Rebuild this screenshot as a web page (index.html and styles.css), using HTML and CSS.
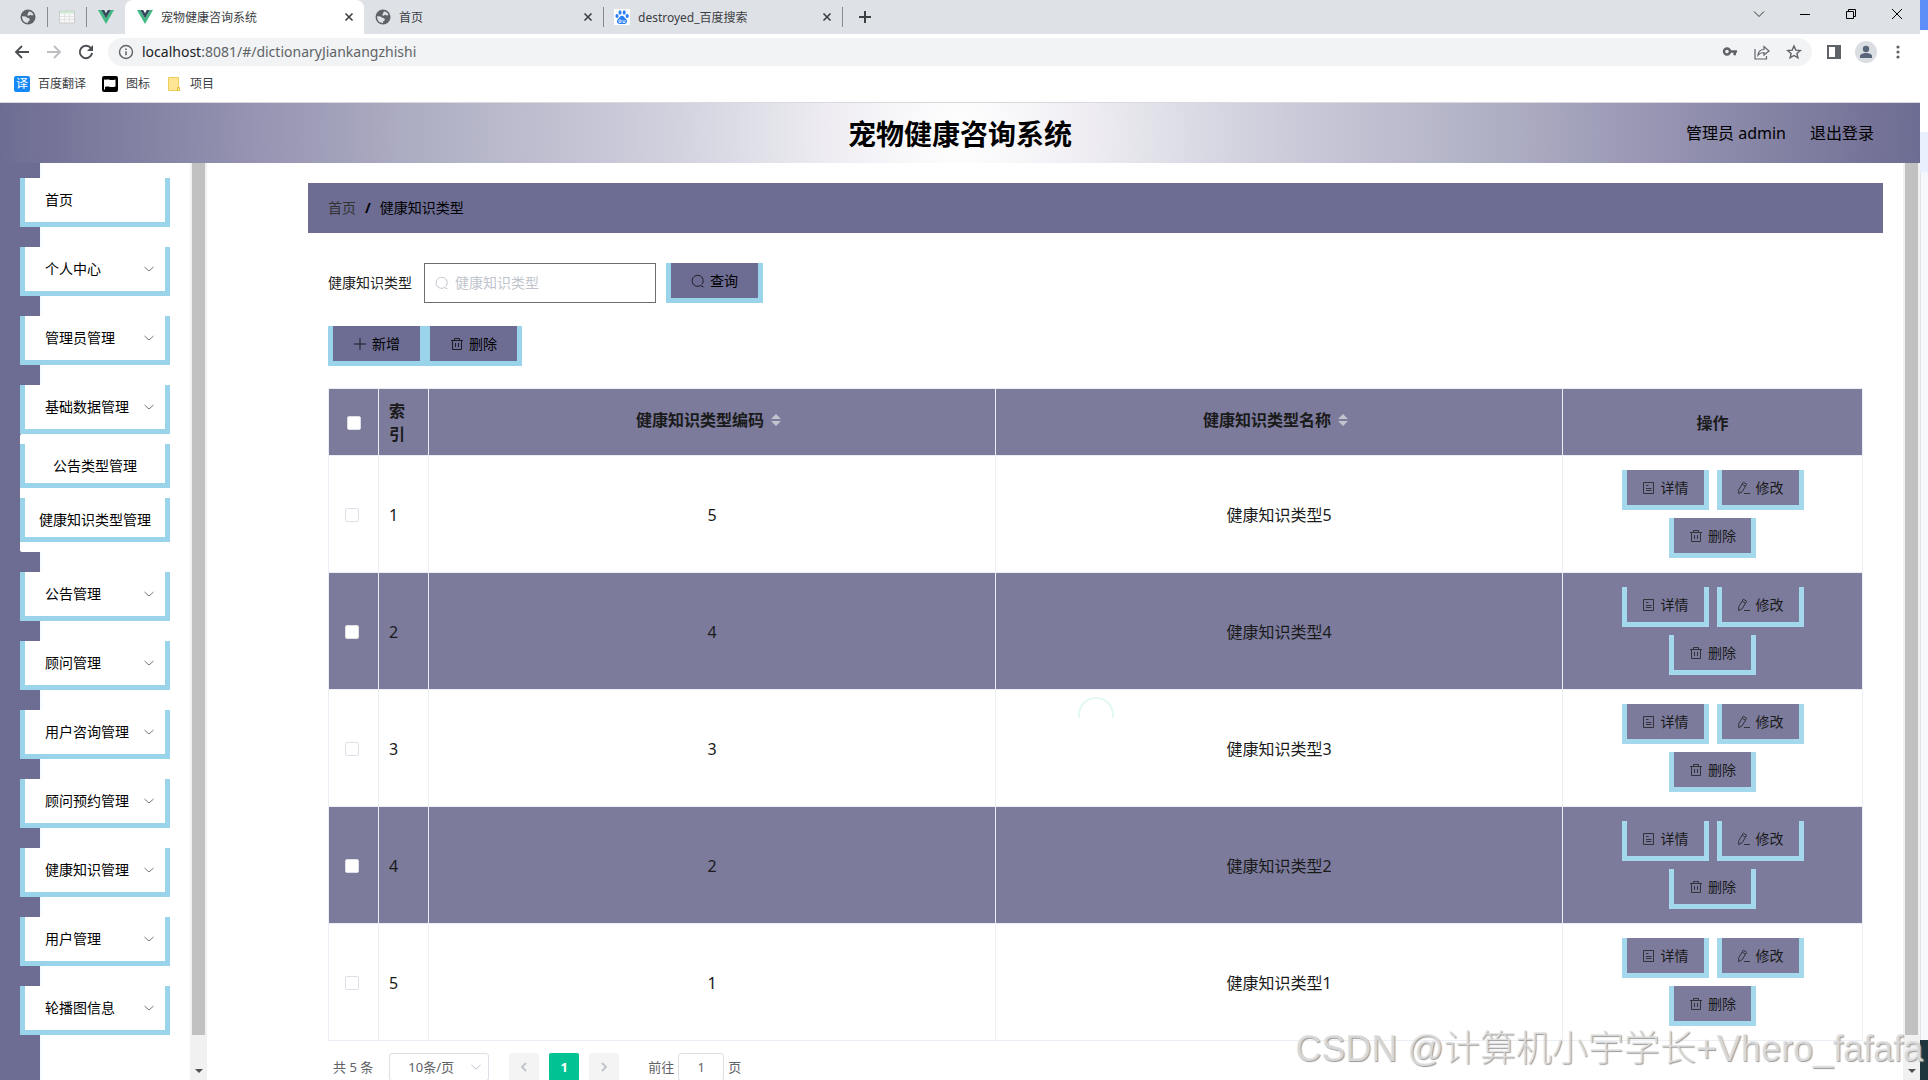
FILE: index.html
```html
<!DOCTYPE html>
<html lang="zh-CN">
<head>
  <meta charset="UTF-8" />
  <meta name="viewport" content="width=device-width, initial-scale=1.0" />
  <title>宠物健康咨询系统</title>
  <link rel="stylesheet" href="styles.css">
</head>
<body>
  <!-- 图标 -->
  <svg class="sprite" aria-hidden="true">
    <symbol id="i-globe" viewBox="0 0 16 16"><circle cx="8" cy="8" r="7.500" fill="#5f6368"/><path d="M9 2.200l3 1.300 1.600 2.500-1.800.6-1.500-.8-1.800 1-1.300-.6.800-1.700z" fill="#dee1e6"/><path d="M2 7.300l3.500.2 1.800 1.300 2.200.6.300 1.800-1.600 1.200-.4 1.600C4.500 14 2 11.500 2 7.300z" fill="#dee1e6"/></symbol>
    <symbol id="i-vue" viewBox="0 0 16 16"><path d="M0 1h3.200L8 9.300 12.800 1H16L8 15z" fill="#41b883"/><path d="M3.200 1h3L8 4.200 9.800 1h3L8 9.300z" fill="#35495e"/></symbol>
    <symbol id="i-x" viewBox="0 0 16 16"><path d="M4.500 4.500l7 7M11.500 4.500l-7 7" fill="none" stroke="#3c4043" stroke-width="1.600"/></symbol>
    <symbol id="i-down" viewBox="0 0 12 12"><path d="M1.500 4l4.500 4 4.500-4" fill="none" stroke="currentColor"/></symbol>
    <symbol id="i-search" viewBox="0 0 14 14"><path d="M9.500 11.500A5.500 5.500 0 1 1 10.800 10.400M9.300 11.300l3.200 1.700" fill="none" stroke="currentColor"/></symbol>
    <symbol id="i-plus" viewBox="0 0 14 14"><path d="M7 1v12M1 7h12" fill="none" stroke="currentColor"/></symbol>
    <symbol id="i-trash" viewBox="0 0 14 14"><path d="M1 3.500h12M2.500 3.500v9h9v-9M4.500 3.500v-2h5v2M5.500 6v4M8.500 6v4" fill="none" stroke="currentColor"/></symbol>
    <symbol id="i-doc" viewBox="0 0 14 14"><path d="M1.500 1.500h10v11h-10zM4 4.500h2.500M4 7.500h5.500M4 9.500h5.500" fill="none" stroke="currentColor"/></symbol>
    <symbol id="i-edit" viewBox="0 0 14 14"><path d="M6.300 1.200l3.400 2-4.600 7.600-3.500 1.800.2-4zM5.200 3.200l3.300 2M7 12.500h6" fill="none" stroke="currentColor"/></symbol>
  </svg>

  <div class="window">
    <!-- 标签栏 -->
    <div class="tabs">
      <button class="pin" aria-label="固定标签 1"><svg class="icon"><use href="#i-globe"/></svg></button>
      <button class="pin split" aria-label="固定标签 2"><svg class="icon" viewBox="0 0 16 16"><path d="M.5 2h15v12H.5z" fill="#f7f7f7" stroke="#ccc"/><path d="M1 2h14v2.500H1z" fill="#cfe8d3"/><path d="M1 7.500h14M1 10.500h14M5.500 5v9M10.500 5v9" stroke="#e2e2e2"/></svg></button>
      <button class="pin split" aria-label="固定标签 3"><svg class="icon"><use href="#i-vue"/></svg></button>
      <div class="tab active"><svg class="icon"><use href="#i-vue"/></svg><span>宠物健康咨询系统</span><button aria-label="关闭"><svg class="icon"><use href="#i-x"/></svg></button></div>
      <div class="tab"><svg class="icon"><use href="#i-globe"/></svg><span>首页</span><button aria-label="关闭"><svg class="icon"><use href="#i-x"/></svg></button></div>
      <div class="tab split"><svg class="icon" viewBox="0 0 16 16"><path d="M0 0h16v16H0z" fill="#fff"/><g fill="#2c7ef8"><ellipse cx="3" cy="7" rx="1.600" ry="2.100"/><ellipse cx="6" cy="3.500" rx="1.500" ry="2.200"/><ellipse cx="10.200" cy="3.500" rx="1.500" ry="2.200"/><ellipse cx="13.200" cy="7" rx="1.600" ry="2.100"/><path d="M8 6.800c2 0 2.500 2 4 3.300 2 1.700 1 4.900-1.500 4.900h-5C3 15 2 11.800 4 10.100 5.500 8.800 6 6.800 8 6.800z"/></g><path d="M5 11h2v2.500H5zM9 11v2.500h2V11" fill="none" stroke="#fff" stroke-width=".8"/></svg><span>destroyed_百度搜索</span><button aria-label="关闭"><svg class="icon"><use href="#i-x"/></svg></button></div>
      <button class="new-tab split" aria-label="新标签"><svg class="icon" viewBox="0 0 16 16"><path d="M8 2v12M2 8h12" stroke="#3c4043" stroke-width="2"/></svg></button>
      <div class="win-controls">
        <button aria-label="搜索标签"><svg class="icon" viewBox="0 0 16 16"><path d="M3 5.500l5 5 5-5" fill="none" stroke="#333"/></svg></button>
        <button aria-label="最小化"><svg class="icon" viewBox="0 0 16 16"><path d="M3 8.500h10" stroke="#000"/></svg></button>
        <button aria-label="还原"><svg class="icon" viewBox="0 0 16 16"><path d="M3.500 5.500h7v7h-7zM5.500 5.500v-2h7v7h-2" fill="none" stroke="#000"/></svg></button>
        <button aria-label="关闭窗口"><svg class="icon" viewBox="0 0 16 16"><path d="M3 3l10 10M13 3L3 13" stroke="#000"/></svg></button>
      </div>
    </div>

    <!-- 地址栏 -->
    <div class="toolbar">
      <button aria-label="后退"><svg class="icon" viewBox="0 0 16 16"><path d="M15 8H2.500M8 2L2 8l6 6" fill="none" stroke="#4a4d51" stroke-width="1.800"/></svg></button>
      <button aria-label="前进"><svg class="icon" viewBox="0 0 16 16"><path d="M1 8h12.500M8 2l6 6-6 6" fill="none" stroke="#bcbec1" stroke-width="1.800"/></svg></button>
      <button aria-label="刷新"><svg class="icon" viewBox="0 0 16 16"><path d="M13 4.300A6.200 6.200 0 1 0 14.100 9" fill="none" stroke="#4a4d51" stroke-width="1.900"/><path d="M15 1v6H9z" fill="#4a4d51"/></svg></button>
      <div class="omnibox">
        <svg class="icon" viewBox="0 0 16 16"><circle cx="8" cy="8" r="6.500" fill="none" stroke="#5f6368" stroke-width="1.400"/><path d="M8 7.200v4M8 4.500V6" stroke="#5f6368" stroke-width="1.500"/></svg>
        <span class="url"><b>localhost</b>:8081/#/dictionaryJiankangzhishi</span>
        <button aria-label="密码"><svg class="icon" viewBox="0 0 16 16"><circle cx="5" cy="7.500" r="3" fill="none" stroke="#5f6368" stroke-width="2.400"/><path d="M8 6.200h7v2.600h-1v2.400h-2.600V8.800H8z" fill="#5f6368"/></svg></button>
        <button aria-label="分享"><svg class="icon" viewBox="0 0 16 16"><path d="M1 5v10h11.500v-3M4 11c.5-4 3-5.500 6-5.500v-3L15 7l-5 4V8.500C7.500 8.500 5.500 9.200 4 11z" fill="none" stroke="#5f6368" stroke-width="1.200"/></svg></button>
        <button aria-label="收藏"><svg class="icon" viewBox="0 0 16 16"><path d="M8 2l1.800 4.100 4.500.4-3.400 3 1 4.400L8 11.500l-3.900 2.400 1-4.400-3.400-3 4.500-.4z" fill="none" stroke="#5f6368" stroke-width="1.400"/></svg></button>
      </div>
      <button aria-label="侧边栏"><svg class="icon" viewBox="0 0 16 16"><path d="M1 1h14v14H1zM3 3v10h6V3z" fill="#5f6368" fill-rule="evenodd"/></svg></button>
      <button class="avatar" aria-label="用户"><svg class="icon" viewBox="0 0 16 16"><g fill="#59657a"><circle cx="8" cy="5" r="3.200"/><path d="M2 14v-2c0-2 3.500-3 6-3s6 1 6 3v2z"/></g></svg></button>
      <button aria-label="更多"><svg class="icon" viewBox="0 0 16 16"><g fill="#5f6368"><circle cx="8" cy="3" r="1.600"/><circle cx="8" cy="8" r="1.600"/><circle cx="8" cy="13" r="1.600"/></g></svg></button>
    </div>

    <div class="bookmarks">
      <a href="#"><i class="bm-fanyi">译</i>百度翻译</a>
      <a href="#"><svg class="icon" viewBox="0 0 16 16"><rect width="16" height="16" rx="2"/><path d="M2.500 13.500V3.500" stroke="#fff"/><path d="M3 4c3.500-1.500 5 1 10.500-.5v7C8 12 6.500 9.500 3 11z" fill="#fff"/></svg>图标</a>
      <a href="#"><svg class="icon" viewBox="0 0 16 16"><path d="M2.500 1.500h10v8l1 5h-11z" fill="#ffe694" stroke="#f0cc58"/><path d="M11.500 14.500v-3h2v3z" fill="#ffe694" stroke="#e8bf40"/></svg>项目</a>
    </div>

    <!-- 顶部 -->
    <header class="header">
      <h1>宠物健康咨询系统</h1>
      <div class="user"><span>管理员 admin</span><a href="#">退出登录</a></div>
    </header>

    <div class="layout">
      <!-- 左侧菜单 -->
      <nav class="sidebar">
        <ul class="menu">
          <li><a href="#">首页</a></li>
          <li><a href="#">个人中心<svg><use href="#i-down"/></svg></a></li>
          <li><a href="#">管理员管理<svg><use href="#i-down"/></svg></a></li>
          <li class="open"><a href="#">基础数据管理<svg><use href="#i-down"/></svg></a>
            <ul class="submenu">
              <li><a href="#">公告类型管理</a></li>
              <li><a href="#">健康知识类型管理</a></li>
            </ul>
          </li>
          <li><a href="#">公告管理<svg><use href="#i-down"/></svg></a></li>
          <li><a href="#">顾问管理<svg><use href="#i-down"/></svg></a></li>
          <li><a href="#">用户咨询管理<svg><use href="#i-down"/></svg></a></li>
          <li><a href="#">顾问预约管理<svg><use href="#i-down"/></svg></a></li>
          <li><a href="#">健康知识管理<svg><use href="#i-down"/></svg></a></li>
          <li><a href="#">用户管理<svg><use href="#i-down"/></svg></a></li>
          <li><a href="#">轮播图信息<svg><use href="#i-down"/></svg></a></li>
        </ul>
      </nav>
      <div class="scrollbar" aria-hidden="true"><i></i><svg viewBox="0 0 8 4"><path d="M0 0h8L4 4z"/></svg></div>

      <!-- 内容 -->
      <main class="main">
        <div class="breadcrumb"><a href="#">首页</a><b>/</b><span>健康知识类型</span></div>
        <div class="content">
          <form class="search">
            <label for="type">健康知识类型</label>
            <div class="search-box"><svg><use href="#i-search"/></svg><input id="type" type="text" placeholder="健康知识类型" /></div>
            <button type="button" class="btn"><svg><use href="#i-search"/></svg>查询</button>
          </form>
          <div class="tools">
            <button class="btn"><svg><use href="#i-plus"/></svg>新增</button>
            <button class="btn"><svg><use href="#i-trash"/></svg>删除</button>
          </div>

          <table class="table">
            <colgroup><col class="c-check"><col class="c-index"><col><col><col class="c-action"></colgroup>
            <thead>
              <tr>
                <th><input type="checkbox" aria-label="全选" /></th>
                <th class="index">索引</th>
                <th><span class="sort">健康知识类型编码<svg viewBox="0 0 10 12"><path d="M0 5l5-5 5 5zM0 7h10l-5 5z"/></svg></span></th>
                <th><span class="sort">健康知识类型名称<svg viewBox="0 0 10 12"><path d="M0 5l5-5 5 5zM0 7h10l-5 5z"/></svg></span></th>
                <th>操作</th>
              </tr>
            </thead>
            <tbody>
              <tr>
                <td><input type="checkbox" aria-label="选择 1" /></td><td class="index">1</td><td>5</td><td>健康知识类型5</td>
                <td><div class="actions"><button class="btn small"><svg><use href="#i-doc"/></svg>详情</button><button class="btn small"><svg><use href="#i-edit"/></svg>修改</button><button class="btn small"><svg><use href="#i-trash"/></svg>删除</button></div></td>
              </tr>
              <tr>
                <td><input type="checkbox" aria-label="选择 2" /></td><td class="index">2</td><td>4</td><td>健康知识类型4</td>
                <td><div class="actions"><button class="btn small"><svg><use href="#i-doc"/></svg>详情</button><button class="btn small"><svg><use href="#i-edit"/></svg>修改</button><button class="btn small"><svg><use href="#i-trash"/></svg>删除</button></div></td>
              </tr>
              <tr>
                <td><input type="checkbox" aria-label="选择 3" /></td><td class="index">3</td><td>3</td><td>健康知识类型3</td>
                <td><div class="actions"><button class="btn small"><svg><use href="#i-doc"/></svg>详情</button><button class="btn small"><svg><use href="#i-edit"/></svg>修改</button><button class="btn small"><svg><use href="#i-trash"/></svg>删除</button></div></td>
              </tr>
              <tr>
                <td><input type="checkbox" aria-label="选择 4" /></td><td class="index">4</td><td>2</td><td>健康知识类型2</td>
                <td><div class="actions"><button class="btn small"><svg><use href="#i-doc"/></svg>详情</button><button class="btn small"><svg><use href="#i-edit"/></svg>修改</button><button class="btn small"><svg><use href="#i-trash"/></svg>删除</button></div></td>
              </tr>
              <tr>
                <td><input type="checkbox" aria-label="选择 5" /></td><td class="index">5</td><td>1</td><td>健康知识类型1</td>
                <td><div class="actions"><button class="btn small"><svg><use href="#i-doc"/></svg>详情</button><button class="btn small"><svg><use href="#i-edit"/></svg>修改</button><button class="btn small"><svg><use href="#i-trash"/></svg>删除</button></div></td>
              </tr>
            </tbody>
          </table>
          <svg class="loading" viewBox="0 0 36 22" aria-hidden="true"><path d="M1 21v-3a17 17 0 0 1 34 0v3" fill="none" stroke="#e3f8f2" stroke-width="2"/></svg>

          <!-- 分页 -->
          <div class="pagination">
            <span>共 5 条</span>
            <div class="page-size"><select aria-label="每页条数"><option>10条/页</option></select><svg><use href="#i-down"/></svg></div>
            <div class="pager">
              <button aria-label="上一页"><svg viewBox="0 0 12 12"><path d="M8 2L4 6l4 4" fill="none" stroke="#c0c4cc" stroke-width="2"/></svg></button>
              <button class="current">1</button>
              <button aria-label="下一页"><svg viewBox="0 0 12 12"><path d="M4 2l4 4-4 4" fill="none" stroke="#c0c4cc" stroke-width="2"/></svg></button>
            </div>
            <label class="jump">前往<input type="text" value="1" />页</label>
          </div>
        </div>
      </main>
      <div class="scrollbar" aria-hidden="true"><i></i><svg viewBox="0 0 8 4"><path d="M0 0h8L4 4z"/></svg></div>
    </div>
  </div>

  <!-- 窗口右侧露出的桌面 -->
  <div class="behind" aria-hidden="true"><i class="blue"></i><i class="blank"></i><i class="pale"></i><i class="panel"></i><i class="dark"></i></div>
  <div class="watermark">CSDN @计算机小宇学长+Vhero_fafafa</div>
</body>
</html>
```
FILE: styles.css
```css
*, *::before, *::after {
  box-sizing: border-box;
  margin: 0;
  padding: 0;
}

body {
  display: flex;
  height: 100vh;
  overflow: hidden;
  position: relative;
  background: #fff;
  color: #000;
  font: 14px/20px "Noto Sans", "Noto Sans CJK SC", sans-serif;
}
button, input, select {
  font: inherit;
  color: inherit;
  border: none;
  background: none;
}
a {
  color: inherit;
  text-decoration: none;
}
ul {
  list-style: none;
}
.sprite {
  display: none;
}
.icon {
  width: 16px;
  height: 16px;
  flex: none;
}
.window {
  flex: 1;
  min-width: 0;
  display: flex;
  flex-direction: column;
}

/* 浏览器标签 */
.tabs {
  display: flex;
  flex: none;
  height: 34px;
  padding-left: 8px;
  background: #dee1e6;
  font-size: 12px;
  color: #3c4043;
}
.tabs button {
  display: flex;
  align-items: center;
  justify-content: center;
}
.pin {
  width: 39px;
  height: 34px;
}
.split {
  background: linear-gradient(#868b90, #868b90) left center / 1px 20px no-repeat;
}
.tab {
  display: flex;
  align-items: center;
  gap: 8px;
  width: 239px;
  padding: 0 7px 0 11px;
}
.tab span {
  flex: 1;
  padding-top: 1px;
}
.tab.active {
  padding-left: 12px;
  background: #fff;
  border-radius: 8px 8px 0 0;
}
.new-tab {
  width: 46px;
}
.win-controls {
  display: flex;
  height: 28px;
  margin-left: auto;
}
.win-controls button {
  width: 46px;
}

/* 地址栏 */
.toolbar {
  display: flex;
  align-items: center;
  flex: none;
  height: 36px;
  padding: 0 6px;
}
.toolbar button {
  display: flex;
  align-items: center;
  justify-content: center;
  width: 32px;
  height: 28px;
}
.omnibox {
  display: flex;
  align-items: center;
  flex: 1;
  height: 28px;
  margin: 0 6px;
  padding: 0 2px 0 10px;
  border-radius: 14px;
  background: #f1f3f4;
}
.url {
  flex: 1;
  margin-left: 8px;
  color: #5f6368;
}
.url b {
  font-weight: 400;
  color: #202124;
}
.toolbar .avatar {
  width: 22px;
  height: 22px;
  margin: 0 5px;
  border-radius: 50%;
  background: #dadde2;
}
.bookmarks {
  display: flex;
  flex: none;
  gap: 16px;
  height: 33px;
  padding: 0 14px 4px;
  border-bottom: 1px solid #d8dadd;
  font-size: 12px;
  color: #3c4043;
}
.bookmarks a {
  display: flex;
  align-items: center;
  gap: 8px;
}
.bm-fanyi {
  width: 16px;
  height: 16px;
  border-radius: 2px;
  background: #1588f5;
  color: #fff;
  font-style: normal;
  line-height: 16px;
  text-align: center;
}

/* 系统顶部 */
.header {
  display: grid;
  grid-template-columns: 1fr auto 1fr;
  align-items: center;
  flex: none;
  height: 60px;
  padding: 0 46px;
  background: radial-gradient(circle, #fff 0%, #eeecf2 14%, #dcdde6 23%, #cccbda 34%, #afafc4 56%, #9896b3 72%, #6d6c92 100%);
}
.header h1 {
  grid-column: 2;
  padding-top: 2px;
  font-size: 28px;
  line-height: 40px;
}
.user {
  display: flex;
  justify-content: flex-end;
  gap: 24px;
  font-size: 16px;
}

.layout {
  display: flex;
  flex: 1;
  min-height: 0;
}

/* 左侧菜单 */
.sidebar {
  flex: none;
  width: 190px;
  padding: 15px 20px;
  overflow: hidden;
  background: linear-gradient(to right, #6d6c92 40px, #f5faff 40px, #fff 44px);
}
.menu > li {
  margin-bottom: 20px;
}
.menu a {
  display: flex;
  align-items: center;
  justify-content: space-between;
  height: 49px;
  padding: 0 10px 0 20px;
  border: 5px solid #9ad4eb;
  border-top: none;
  background: #fff;
}
.menu svg {
  width: 12px;
  height: 12px;
  color: #777;
}
.submenu {
  display: flex;
  flex-direction: column;
  gap: 10px;
  padding: 10px 0;
  border-radius: 2px;
  background: #fff;
}
.menu .submenu a {
  justify-content: center;
  height: 44px;
  padding: 4px 0 0;
}

.scrollbar {
  display: flex;
  flex-direction: column;
  align-items: center;
  flex: none;
  width: 17px;
  padding-bottom: 7px;
  background: #f1f1f1;
}
.scrollbar i {
  flex: 1;
  width: 13px;
  margin-bottom: 34px;
  background: #c1c1c1;
}
.scrollbar svg {
  width: 8px;
  height: 4px;
  fill: #505050;
}

/* 内容区 */
.main {
  flex: 1;
  min-width: 0;
  padding: 20px 20px 0 101px;
  overflow: hidden;
}
.breadcrumb {
  display: flex;
  align-items: center;
  gap: 9px;
  height: 50px;
  padding: 0 20px;
  background: #6d6c92;
}
.breadcrumb a {
  color: #333;
}
.content {
  position: relative;
  padding: 30px 20px 0;
}
.search {
  display: flex;
  align-items: center;
  color: #222;
}
.search-box {
  display: flex;
  align-items: center;
  gap: 6px;
  width: 232px;
  height: 40px;
  margin: 0 10px 0 12px;
  padding: 0 10px;
  border: 1px solid #6e6e6e;
  color: #c0c4cc;
}
.search-box svg {
  flex: none;
  width: 14px;
  height: 14px;
}
.search-box input {
  flex: 1;
  min-width: 0;
  outline: none;
}
.search-box input::placeholder {
  color: #c0c4cc;
}
.btn {
  display: flex;
  align-items: center;
  gap: 5px;
  height: 40px;
  padding: 0 20px;
  border: 5px solid #9ad4eb;
  border-top: none;
  background: #6d6c92;
  color: #000;
}
.btn svg {
  width: 14px;
  height: 14px;
  opacity: .75;
}
.btn.small {
  padding: 0 15px;
  border-color: #a3d8ed;
  background: #7c7b9c;
  color: #1a1a1a;
  font-size: 14px;
}
.tools {
  display: flex;
  margin: 23px 0 22px;
}

/* 表格 */
.table {
  width: 100%;
  table-layout: fixed;
  border-collapse: separate;
  border-spacing: 0;
  border: 1px solid #ebeef5;
  border-right: none;
  border-bottom: none;
  font-size: 16px;
  color: #1a1a1a;
}
.table th, .table td {
  padding-top: 2px;
  border-right: 1px solid #ebeef5;
  border-bottom: 1px solid #ebeef5;
  text-align: center;
}
.table th {
  height: 67px;
  background: #7c7b9c;
  font-weight: 700;
  line-height: 23px;
}
.table td {
  height: 117px;
}
.table td:last-child {
  padding-top: 0;
}
.table tbody tr:nth-child(even) {
  background: #7c7b9c;
}
.c-check, .c-index {
  width: 50px;
}
.c-action {
  width: 300px;
}
.table .index {
  padding: 2px 20px 0 10px;
  text-align: left;
}
.table input {
  appearance: none;
  display: block;
  width: 14px;
  height: 14px;
  margin: 0 auto 0 16px;
  border: 1px solid #dcdfe6;
  border-radius: 2px;
  background: #fff;
}
.table th input {
  margin-left: 18px;
}
.sort {
  display: flex;
  align-items: center;
  justify-content: center;
  gap: 7px;
  padding: 0 7px 6px 0;
}
.sort svg {
  width: 10px;
  height: 12px;
  fill: #c0c4cc;
}
.actions {
  display: flex;
  flex-wrap: wrap;
  justify-content: center;
  gap: 8px;
  padding: 0 20px;
}

/* 加载圈，浮在表格上面 */
.loading {
  position: absolute;
  top: 464px;
  left: 50%;
  width: 36px;
  height: 22px;
  margin-left: -18px;
}

/* 分页 */
.pagination {
  display: flex;
  align-items: center;
  margin-top: 12px;
  padding: 0 5px;
  font-size: 13px;
  color: #606266;
}
.page-size {
  display: grid;
  align-items: center;
  width: 100px;
  margin: 0 20px 0 16px;
}
.page-size select {
  grid-area: 1 / 1;
  appearance: none;
  height: 28px;
  padding: 0 20px 0 4px;
  border: 1px solid #dcdfe6;
  border-radius: 3px;
  text-align: center;
  text-align-last: center;
}
.page-size svg {
  grid-area: 1 / 1;
  justify-self: end;
  width: 12px;
  height: 12px;
  margin-right: 7px;
  color: #c0c4cc;
  pointer-events: none;
}
.pager {
  display: flex;
  gap: 10px;
}
.pager button {
  display: flex;
  align-items: center;
  justify-content: center;
  width: 30px;
  height: 28px;
  border-radius: 2px;
  background: #f4f4f5;
}
.pager svg {
  width: 12px;
  height: 12px;
}
.pager .current {
  background: #00c292;
  color: #fff;
  font-weight: 700;
}
.jump {
  display: flex;
  align-items: center;
  gap: 4px;
  margin-left: 29px;
}
.jump input {
  width: 46px;
  height: 28px;
  border: 1px solid #dcdfe6;
  border-radius: 3px;
  text-align: center;
}

/* 右侧桌面 */
.behind {
  display: flex;
  flex-direction: column;
  flex: none;
  width: 8px;
}
.blue {
  height: 30px;
  background: #5e8ff8;
}
.blank {
  height: 102px;
}
.pale {
  height: 40px;
  background: #e8f0fe;
}
.panel {
  flex: 1;
  border-left: 1px solid #e0e3e8;
  background: #f5f7fa;
}
.dark {
  height: 40px;
  background: #20363f;
}

.watermark {
  position: absolute;
  right: 5px;
  bottom: 6px;
  font: 300 36px/50px "Liberation Sans", "Noto Sans CJK SC", sans-serif;
  color: rgba(225, 225, 225, .85);
  text-shadow: 1px 1px 1px #999;
  white-space: nowrap;
}
```
